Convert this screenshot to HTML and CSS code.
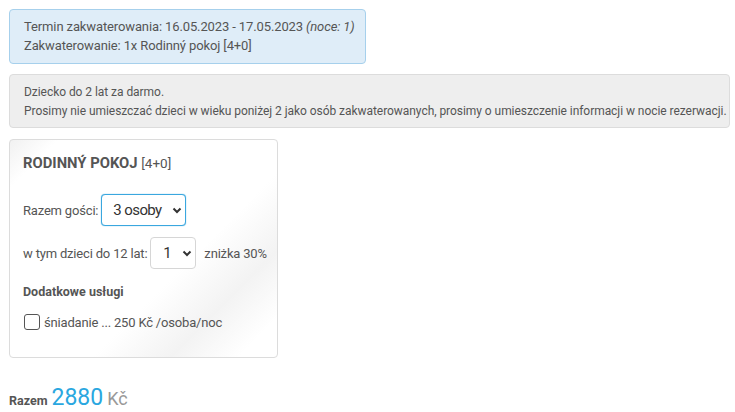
FILE: index.html
```html
<html>
  <head>
    <title>Rezerwacja</title>
    <meta charset="UTF-8" />
    <meta name="viewport" content="width=device-width, initial-scale=1.0" />
    <link rel="stylesheet" href="styles.css">
  </head>
  <body>
    <main class="booking">
      <div class="alert alert-info">
        <div>Termin zakwaterowania: 16.05.2023 - 17.05.2023 <em>(noce: 1)</em></div>
        <div>Zakwaterowanie: 1x Rodinný pokoj [4+0]</div>
      </div>
      <div class="alert alert-note">
        <div>Dziecko do 2 lat za darmo.</div>
        <div>Prosimy nie umieszczać dzieci w wieku poniżej 2 jako osób zakwaterowanych, prosimy o umieszczenie informacji w nocie rezerwacji.</div>
      </div>
      <div class="room">
        <h3 class="room-title">RODINNÝ POKOJ <span>[4+0]</span></h3>
        <div class="row row-first">
          <label>Razem gości:</label>
          <div class="select select-active">
            <span>3 osoby</span>
            <svg width="10" height="7" viewBox="0 0 10 7"><path d="M1.5 1.5 L5 5 L8.5 1.5" fill="none" stroke="#333" stroke-width="2"/></svg>
          </div>
        </div>
        <div class="row">
          <label>w tym dzieci do 12 lat:</label>
          <div class="select select-small">
            <span>1</span>
            <svg width="10" height="7" viewBox="0 0 10 7"><path d="M1.5 1.5 L5 5 L8.5 1.5" fill="none" stroke="#333" stroke-width="2"/></svg>
          </div>
          <span class="discount">zniżka 30%</span>
        </div>
        <h4 class="extras">Dodatkowe usługi</h4>
        <label class="check">
          <span class="box"></span>
          śniadanie ... 250 Kč /osoba/noc
        </label>
      </div>
      <div class="total">
        <b>Razem</b> <span class="price">2880</span> <span class="currency">Kč</span>
      </div>
    </main>
  </body>
</html>
```

FILE: styles.css
```css
html,
body {
  margin: 0;
  padding: 0;
  background: #fff;
  font-family: Roboto, "Liberation Sans", sans-serif;
  color: #555;
}

.booking {
  padding: 9px;
}

.alert {
  border-radius: 4px;
  font-size: 13px;
  line-height: 19px;
  box-sizing: border-box;
  white-space: nowrap;
}

.alert-info {
  background: #dfedf8;
  border: 1px solid #a6d0ec;
  padding: 7px 14px 8px 14px;
  width: 357px;
  letter-spacing: -0.12px;
}

.alert-note {
  margin-top: 10px;
  background: #eeeeee;
  border: 1px solid #dcdcdc;
  padding: 8px 14px 6px 14px;
  font-size: 12px;
  letter-spacing: -0.05px;
  width: 721px;
}

.room {
  margin-top: 11px;
  width: 269px;
  box-sizing: border-box;
  border: 1px solid #dcdcdc;
  border-radius: 4px;
  padding: 13px 13px 0 13px;
  height: 219px;
  background: linear-gradient(135deg, #f1f1f1 0%, #ffffff 10%, #ffffff 62%, #f3f3f3 78%, #ffffff 92%);
  font-size: 13px;
  letter-spacing: -0.18px;
  white-space: nowrap;
}

.room-title {
  margin: 0;
  font-size: 14.8px;
  font-weight: bold;
  color: #555;
  line-height: 20px;
  letter-spacing: 0;
}

.room-title span {
  font-weight: normal;
  font-size: 13.5px;
}

.row {
  display: flex;
  align-items: center;
  margin-top: 11px;
}

.row-first {
  margin-top: 21px;
}

.row label {
  margin-right: 3px;
  flex-shrink: 0;
}

.select {
  display: flex;
  flex-shrink: 0;
  align-items: center;
  justify-content: space-between;
  box-sizing: border-box;
  height: 32px;
  border: 1px solid #d6d6d6;
  border-radius: 4px;
  background: #fff;
  padding: 0 3px 0 11px;
  font-size: 15px;
  letter-spacing: -0.6px;
  color: #333;
}

.select-active {
  width: 85px;
  border-color: #3aa7df;
  box-shadow: 0 0 1px #3aa7df;
}

.select-small {
  width: 46px;
  padding-left: 12px;
}

.discount {
  margin-left: 8px;
}

.extras {
  margin: 14px 0 0 0;
  font-size: 12.5px;
  font-weight: bold;
  line-height: 18px;
  letter-spacing: 0;
}

.check {
  display: flex;
  align-items: center;
  margin-top: 13px;
  font-size: 13px;
}

.box {
  width: 14px;
  height: 14px;
  border: 1px solid #555;
  border-radius: 3px;
  margin-left: 1px;
  margin-right: 4px;
  background: #fff;
}

.total {
  margin-top: 26px;
}

.total b {
  font-size: 12.5px;
}

.price {
  font-size: 23px;
  color: #2aa7e0;
}

.currency {
  font-size: 18px;
  color: #999;
}
```
